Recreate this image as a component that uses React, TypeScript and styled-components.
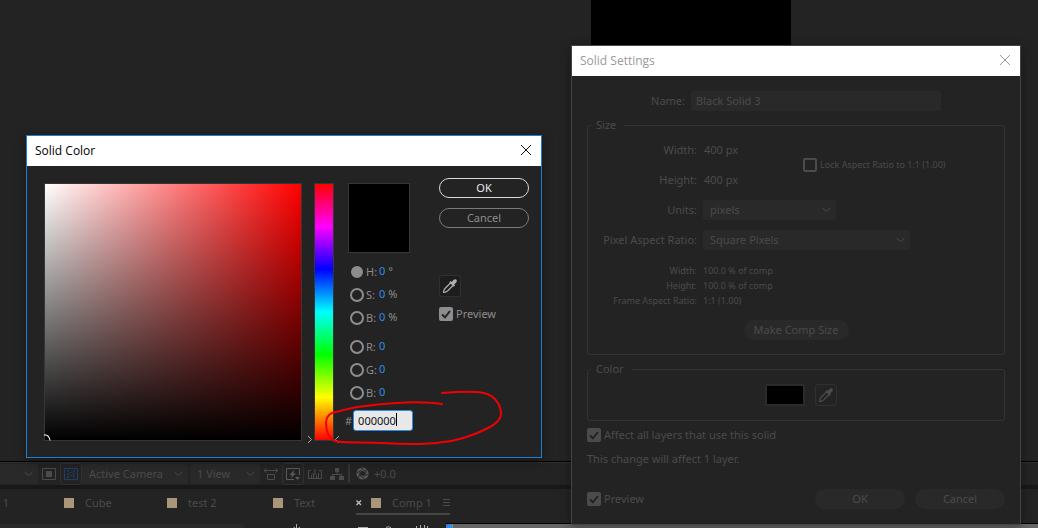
import React, { useState } from 'react';
import styled, { createGlobalStyle, css } from 'styled-components';

const ui = `"Noto Sans", "Open Sans", sans-serif`;
const dim = '#4b4b4b';

const GlobalStyle = createGlobalStyle`
  *, *::before, *::after { box-sizing: border-box; }
  body { margin: 0; background: #232323; font: 11px/14px ${ui}; color: ${dim}; overflow: hidden; }
  button, input, select { font: inherit; color: inherit; margin: 0; }
`;

const Workspace = styled.div`
  position: relative;
  display: flex;
  flex-direction: column;
  height: 100vh;
  overflow: hidden;
`;

const Viewer = styled.main`
  flex: 1;
  min-height: 0;
  overflow: hidden;
`;

const Composition = styled.div`
  width: 200px;
  height: 200px;
  margin-left: 591px;
  background: #000;
`;

/* ---------- Footer panels ---------- */

const ViewerBar = styled.div`
  display: flex;
  align-items: center;
  height: 24px;
  flex: none;
  border-top: 1px solid #000;
  box-shadow: inset 0 1px #303030;
`;

const SelectBox = styled.span<{ $w: number }>`
  position: relative;
  display: inline-flex;
  width: ${(p) => p.$w}px;
  height: 20px;
  flex: none;
`;

const SelectField = styled.select`
  width: 100%;
  height: 100%;
  padding: 0 20px 0 7px;
  appearance: none;
  border: 0;
  border-radius: 2px;
  background: #292929;
`;

const SelectArrow = styled.svg`
  position: absolute;
  right: 5px;
  top: 7px;
  pointer-events: none;
`;

const ViewSelects = styled.span`
  display: flex;
  gap: 2px;
`;

const IconButton = styled.button<{ $w?: number; $framed?: boolean }>`
  display: inline-flex;
  align-items: center;
  justify-content: center;
  width: ${(p) => p.$w ?? 22}px;
  height: 22px;
  padding: 0;
  flex: none;
  border: 1px solid ${(p) => (p.$framed ? '#303030' : 'transparent')};
  border-radius: 3px;
  background: transparent;
`;

const BarDivider = styled.span`
  width: 2px;
  height: 19px;
  margin: 0 4px 0 0;
  background: #343434;
`;

const Exposure = styled.span`
  margin-left: 4px;
`;

const Tabs = styled.nav`
  display: flex;
  align-items: flex-start;
  height: 38px;
  flex: none;
  border-top: 4px solid #181818;
`;

const Tab = styled.button<{ $w: number; $active?: boolean }>`
  display: flex;
  align-items: center;
  gap: 11px;
  width: ${(p) => p.$w}px;
  height: 26px;
  padding: 3px 0 0;
  flex: none;
  border: 0;
  border-bottom: 2px solid ${(p) => (p.$active ? '#464646' : 'transparent')};
  background: none;
  text-align: left;
  white-space: nowrap;
`;

const Label = styled.i`
  width: 10px;
  height: 10px;
  flex: none;
  background: #aa9678;
`;

const TabClose = styled.svg`
  margin-right: -2px;
  flex: none;
`;

const Timeline = styled.div`
  display: flex;
  height: 5px;
  flex: none;
`;

const TimelineColumns = styled.div`
  display: flex;
  width: 446px;
  flex: none;
`;

const SearchStrip = styled.div`
  width: 244px;
  height: 4px;
  margin-top: 1px;
  border-radius: 0 3px 0 0;
  background: #2a2a2a;
`;

const WorkArea = styled.div`
  flex: 1;
  border-top: 1px solid #000;
  background: #666;
`;

const WorkAreaHandle = styled.div`
  width: 7px;
  height: 4px;
  border-right: 1px solid #8a8a8a;
  border-radius: 4px 0 0 0;
  background: #2d8ceb;
`;

/* ---------- Dialog parts ---------- */

const Dialog = styled.section<{ $x: number; $y: number; $w: number; $edge: string }>`
  position: absolute;
  left: ${(p) => p.$x}px;
  top: ${(p) => p.$y}px;
  width: ${(p) => p.$w}px;
  border: 1px solid ${(p) => p.$edge};
  background: #232323;
  box-shadow: 0 3px 10px rgba(0, 0, 0, 0.35);
`;

const TitleBar = styled.header<{ $inactive?: boolean }>`
  display: flex;
  align-items: center;
  justify-content: space-between;
  height: 30px;
  padding: 0 7px 0 8px;
  background: #fff;
  color: ${(p) => (p.$inactive ? '#999' : '#000')};
  font: 12px/16px "Open Sans", "Noto Sans", sans-serif;
`;

const Title = styled.h1`
  margin: 0;
  font: inherit;
`;

const CloseButton = styled.button`
  display: flex;
  padding: 0 2px 2px;
  border: 0;
  background: none;
`;

const PillButton = styled.button<{ $tone?: 'primary' | 'outline' | 'muted'; $w?: number }>`
  width: ${(p) => p.$w ?? 90}px;
  height: 20px;
  padding: 0;
  border: 1px solid transparent;
  border-radius: 10px;
  line-height: 16px;
  ${(p) =>
    p.$tone === 'primary'
      ? css`background: #232323; border-color: #d8d8d8; color: #e8e8e8;`
      : p.$tone === 'outline'
        ? css`background: #232323; border-color: #7b7b7b; color: #8d8d8d;`
        : css`background: #292929; color: ${dim};`}
`;

const CheckLabel = styled.label<{ $small?: boolean }>`
  display: inline-flex;
  align-items: center;
  gap: 3px;
  white-space: nowrap;
  font-size: ${(p) => (p.$small ? 9 : 11)}px;
`;

const CheckBox = styled.span`
  position: relative;
  display: flex;
  width: 14px;
  height: 14px;
`;

const CheckInput = styled.input`
  width: 14px;
  height: 14px;
  appearance: none;
  border: 2px solid currentColor;
  border-radius: 2px;
  &:checked { background: currentColor; }
  &:not(:checked) + svg { display: none; }
`;

const CheckMark = styled.svg`
  position: absolute;
  inset: 0;
  pointer-events: none;
`;

/* ---------- Solid Color ---------- */

const PickerBody = styled.div`
  display: flex;
  padding: 12px 12px 16px 17px;
  color: #8d8d8d;
`;

const ColorField = styled.div`
  position: relative;
  width: 258px;
  height: 258px;
  margin-top: 5px;
  flex: none;
  border: 1px solid #363636;
  background: linear-gradient(to bottom, transparent, #000), linear-gradient(to right, #fff, #f00);
`;

const FieldCursor = styled.svg`
  position: absolute;
  left: -2px;
  bottom: -2px;
`;

const HueStrip = styled.div`
  position: relative;
  width: 20px;
  height: 258px;
  margin: 5px 0 0 12px;
  flex: none;
  border: 1px solid #363636;
  background: linear-gradient(to bottom, #f00, #f0f, #00f, #0ff, #0f0, #ff0, #f00);
`;

const HuePointers = styled.svg`
  position: absolute;
  left: -8px;
  bottom: -4px;
`;

const Channels = styled.div`
  width: 70px;
  margin: 5px 0 0 11px;
`;

const Preview = styled.div`
  width: 62px;
  height: 70px;
  margin: 0 0 7px 3px;
  border: 1px solid #363636;
  background: #000;
`;

const ChannelGroup = styled.div`
  margin: 0 0 6px 5px;
`;

const ChannelRow = styled.div`
  display: grid;
  grid-template-columns: 16px 13px auto auto;
  justify-content: start;
  align-items: center;
  height: 23px;
`;

const Radio = styled.input`
  width: 14px;
  height: 14px;
  appearance: none;
  border: 2px solid #8d8d8d;
  border-radius: 50%;
  &:checked { width: 12px; height: 12px; margin-left: 1px; background: #8d8d8d; }
`;

const ChannelValue = styled.span`
  padding-bottom: 2px;
  color: #2d8ceb;
`;

const ChannelUnit = styled.span`
  padding: 0 0 1px 3px;
`;

const HexRow = styled.label`
  display: flex;
  align-items: center;
  gap: 1px;
`;

const HexInput = styled.input`
  width: 60px;
  height: 21px;
  padding: 0 0 1px 4px;
  border: 1px solid #2d8ceb;
  border-radius: 3px;
  outline: 0;
  background: #e8e8e8;
  color: #111;
`;

const HexBox = styled.span`
  position: relative;
  display: flex;
`;

const Caret = styled.i`
  position: absolute;
  left: 43px;
  top: 3px;
  width: 1px;
  height: 13px;
  background: #000;
`;

const Actions = styled.div`
  display: flex;
  flex-direction: column;
  align-items: flex-start;
  gap: 10px;
  margin-left: auto;
`;

const Sampler = styled(IconButton)`
  margin-top: 37px;
  background: #1d1d1d;
`;

const Scribble = styled.svg`
  position: absolute;
  left: 290px;
  top: 245px;
  pointer-events: none;
`;

/* ---------- Solid Settings ---------- */

const SettingsBody = styled.form`
  display: flex;
  flex-direction: column;
  padding: 15px;
`;

const NameRow = styled.label`
  display: grid;
  grid-template-columns: 98px 250px;
  gap: 6px;
  align-items: center;
  text-align: right;
`;

const TextInput = styled.input`
  height: 20px;
  padding: 0 5px 1px;
  border: 0;
  border-radius: 2px;
  background: #292929;
`;

const Group = styled.fieldset<{ $top: number }>`
  min-width: 0;
  margin: 7px 0 0;
  padding: ${(p) => p.$top}px 0 14px;
  border: 1px solid #323232;
  border-radius: 3px;
`;

const Legend = styled.legend`
  margin-left: 3px;
  padding: 0 8px 0 5px;
`;

const SizeGrid = styled.div`
  display: grid;
  grid-template-columns: 109px 94px 1fr;
  grid-auto-rows: 30px;
  column-gap: 6px;
  align-items: center;
`;

const FieldLabel = styled.label`
  text-align: right;
  white-space: nowrap;
`;

const NumberValue = styled.span`
  padding-left: 1px;
`;

const Wide = styled.span`
  display: flex;
  grid-column: 2 / 4;
`;

const LockCell = styled.div`
  display: flex;
  align-items: center;
  grid-column: 3;
  grid-row: 1 / 3;
`;

const Facts = styled.dl`
  display: grid;
  grid-template-columns: 109px 1fr;
  column-gap: 6px;
  margin: 8px 0 12px;
  font-size: 9px;
  line-height: 15px;
`;

const FactName = styled.dt`
  text-align: right;
`;

const FactValue = styled.dd`
  margin: 0;
`;

const Centered = styled.div<{ $gap?: boolean }>`
  display: flex;
  justify-content: center;
  gap: 10px;
  padding-left: ${(p) => (p.$gap ? 10 : 0)}px;
`;

const Swatch = styled.button`
  width: 40px;
  height: 22px;
  padding: 0;
  border: 2px solid #2b2b2b;
  background: #000;
`;

const Options = styled.div`
  display: flex;
  flex-direction: column;
  align-items: flex-start;
  gap: 10px;
  margin: 7px 0 23px;
`;

const Note = styled.p`
  margin: 0;
`;

const Footer = styled.footer`
  display: flex;
  align-items: center;
  gap: 10px;
`;

const Spacer = styled.span`
  flex: 1;
`;

function Close({ color }: { color: string }) {
  return (
    <CloseButton aria-label="Close" type="button">
      <svg width="12" height="12" viewBox="0 0 12 12" fill="none" stroke={color}>
        <path d="M1 1L11 11M11 1L1 11" />
      </svg>
    </CloseButton>
  );
}

function Dropper({ color }: { color: string }) {
  return (
    <svg width="16" height="16" viewBox="0 0 16 16" fill="none">
      <path d="M9 4.500L3 10.500Q1.300 12.500 1.500 14.500Q3.500 14.500 5.500 13L11.500 7" stroke={color} strokeWidth="1.2" />
      <path d="M7.300 4.200L8.600 3L9.800 4L11.600 1.800Q13.200 .6 14.500 1.700Q15.500 3 14.200 4.600L12.200 6.400L13 7.400L11.800 8.700Z" fill={color} />
    </svg>
  );
}

function Select({ id, label, value, w }: { id: string; label?: string; value: string; w: number }) {
  return (
    <SelectBox $w={w}>
      <SelectField id={id} aria-label={label} defaultValue={value}>
        <option>{value}</option>
      </SelectField>
      <SelectArrow width="9" height="6" fill="none" stroke={dim}>
        <path d="M.5 1L4.500 4.500L8.500 1" />
      </SelectArrow>
    </SelectBox>
  );
}

function Check({ text, checked, small }: { text: string; checked?: boolean; small?: boolean }) {
  return (
    <CheckLabel $small={small}>
      <CheckBox>
        <CheckInput type="checkbox" defaultChecked={checked} />
        <CheckMark width="14" height="14" fill="none" stroke="#232323" strokeWidth="2">
          <path d="M3 7.500L6 10.300L11 4" />
        </CheckMark>
      </CheckBox>
      {text}
    </CheckLabel>
  );
}

type Channel = { id: string; name: string; unit?: string };
const hsb: Channel[] = [
  { id: 'hue', name: 'H:', unit: '°' },
  { id: 'sat', name: 'S:', unit: '%' },
  { id: 'bri', name: 'B:', unit: '%' },
];
const rgb: Channel[] = [
  { id: 'red', name: 'R:' },
  { id: 'green', name: 'G:' },
  { id: 'blue', name: 'B:' },
];

function ChannelList({ items }: { items: Channel[] }) {
  return (
    <ChannelGroup>
      {items.map((c) => (
        <ChannelRow key={c.id}>
          <Radio type="radio" name="channel" id={c.id} defaultChecked={c.id === 'hue'} />
          <label htmlFor={c.id}>{c.name}</label>
          <ChannelValue>0</ChannelValue>
          {c.unit && <ChannelUnit>{c.unit}</ChannelUnit>}
        </ChannelRow>
      ))}
    </ChannelGroup>
  );
}

function SolidColor() {
  const [hex, setHex] = useState('000000');
  return (
    <Dialog $x={26} $y={135} $w={516} $edge="#1b7fd0" aria-label="Solid Color">
      <TitleBar>
        <Title>Solid Color</Title>
        <Close color="#111" />
      </TitleBar>
      <PickerBody>
        <ColorField>
          <FieldCursor width="9" height="9" fill="none" stroke="#ddd" strokeWidth="1.3">
            <path d="M1 2Q6 1.500 7 7.500" />
          </FieldCursor>
        </ColorField>
        <HueStrip>
          <HuePointers width="34" height="9" fill="none" stroke="#aaa">
            <path d="M1 1L4.500 4.500L1 8M32 1L28.500 4.500L32 8" />
          </HuePointers>
        </HueStrip>
        <Channels>
          <Preview />
          <ChannelList items={hsb} />
          <ChannelList items={rgb} />
          <HexRow>
            #
            <HexBox>
              <HexInput value={hex} onChange={(e) => setHex(e.target.value)} />
              <Caret />
            </HexBox>
          </HexRow>
        </Channels>
        <Actions>
          <PillButton $tone="primary">OK</PillButton>
          <PillButton $tone="outline">Cancel</PillButton>
          <Sampler $framed aria-label="Eyedropper"><Dropper color="#b0b0b0" /></Sampler>
          <Check text="Preview" checked />
        </Actions>
      </PickerBody>
      <Scribble width="200" height="70" fill="none" stroke="#f00000" strokeWidth="2" strokeLinecap="round">
        <path d="M125 12C137 11 158 10 167 12C179 15 184 25 184 33C184 38 178 44 171 47C158 54 139 60 126 61C107 64 81 63 65 62C47 61 23 62 18 60C11 57 9 49 9 42C9 37 11 34 15 32C35 26 61 23 79 22C94 21 112 21 125 23" />
      </Scribble>
    </Dialog>
  );
}

function SolidSettings() {
  return (
    <Dialog $x={571} $y={45} $w={450} $edge="#444" aria-label="Solid Settings">
      <TitleBar $inactive>
        <Title>Solid Settings</Title>
        <Close color="#999" />
      </TitleBar>
      <SettingsBody onSubmit={(e) => e.preventDefault()}>
        <NameRow>
          Name:
          <TextInput defaultValue="Black Solid 3" />
        </NameRow>
        <Group $top={3}>
          <Legend>Size</Legend>
          <SizeGrid>
            <FieldLabel as="span">Width:</FieldLabel>
            <NumberValue>400 px</NumberValue>
            <LockCell><Check text="Lock Aspect Ratio to 1:1 (1.00)" small /></LockCell>
            <FieldLabel as="span">Height:</FieldLabel>
            <NumberValue>400 px</NumberValue>
            <FieldLabel htmlFor="units">Units:</FieldLabel>
            <Wide><Select id="units" value="pixels" w={133} /></Wide>
            <FieldLabel htmlFor="par">Pixel Aspect Ratio:</FieldLabel>
            <Wide><Select id="par" value="Square Pixels" w={207} /></Wide>
          </SizeGrid>
          <Facts>
            <FactName>Width:</FactName><FactValue>100.0 % of comp</FactValue>
            <FactName>Height:</FactName><FactValue>100.0 % of comp</FactValue>
            <FactName>Frame Aspect Ratio:</FactName><FactValue>1:1 (1.00)</FactValue>
          </Facts>
          <Centered><PillButton type="button" $w={105}>Make Comp Size</PillButton></Centered>
        </Group>
        <Group $top={8}>
          <Legend>Color</Legend>
          <Centered $gap>
            <Swatch type="button" aria-label="Solid color" />
            <IconButton type="button" $framed aria-label="Eyedropper"><Dropper color={dim} /></IconButton>
          </Centered>
        </Group>
        <Options>
          <Check text="Affect all layers that use this solid" checked />
          <Note>This change will affect 1 layer.</Note>
        </Options>
        <Footer>
          <Check text="Preview" checked />
          <Spacer />
          <PillButton>OK</PillButton>
          <PillButton type="button">Cancel</PillButton>
        </Footer>
      </SettingsBody>
    </Dialog>
  );
}

export default function App() {
  return (
    <Workspace>
      <GlobalStyle />
      <Viewer><Composition /></Viewer>
      <ViewerBar>
        <Select id="channelView" label="Channels" value="" w={38} />
        <IconButton aria-label="Region of interest">
          <svg width="14" height="12" fill="none" stroke={dim}>
            <path d="M.5 .5H13.500V11.500H.5Z" /><path d="M4 3H10V9H4Z" fill={dim} stroke="none" />
          </svg>
        </IconButton>
        <IconButton $framed aria-label="Transparency grid">
          <svg width="14" height="12" fill="none" stroke="#1f4066">
            <path d="M.5 .5H13.500V11.500H.5Z" />
            <path d="M3 2h2v2H3zM9 2h2v2H9zM5 4h4v1H5zM3 5h2v2H3zM9 5h2v2H9zM5 7h4v1H5zM3 8h2v2H3zM9 8h2v2H9z" fill="#1f3550" stroke="none" />
          </svg>
        </IconButton>
        <ViewSelects>
          <Select id="camera" label="Camera" value="Active Camera" w={106} />
          <Select id="views" label="View layout" value="1 View" w={70} />
        </ViewSelects>
        <IconButton aria-label="Pixel aspect correction">
          <svg width="16" height="12" fill="none" stroke={dim}>
            <path d="M1 2.500H15M3.500 .5L1 2.500L3.500 4.500M12.500 .5L15 2.500L12.500 4.500M4.500 6.500H11.500V11.500H4.500Z" />
          </svg>
        </IconButton>
        <IconButton $framed aria-label="Fast previews">
          <svg width="16" height="14" fill="none" stroke="#5a5a5a">
            <path d="M9 12.500H1.500V1.500H14.500V8" /><path d="M9 3L4.500 8H7L6 11L11 6.500H8.500ZM10 10H15L12.500 13Z" fill="#5a5a5a" stroke="none" />
          </svg>
        </IconButton>
        <IconButton aria-label="Timeline">
          <svg width="14" height="12" fill="none" stroke={dim}>
            <path d="M3 2.500H.5V10.500H13.500V2.500H11M3.500 7V10M5.500 5V10M8.500 7V10M10.500 5V10M7 1V7" />
          </svg>
        </IconButton>
        <IconButton aria-label="Flowchart">
          <svg width="14" height="12" fill="none" stroke={dim}>
            <path d="M7 4V6.500M2.500 9V6.500H11.500V9" /><path d="M5 0h4v4H5zM0 8h5v4H0zM9 8h5v4H9z" fill={dim} stroke="none" />
          </svg>
        </IconButton>
        <BarDivider />
        <IconButton $w={16} aria-label="Reset exposure">
          <svg width="13" height="13" viewBox="0 0 13 13" fill="none" stroke="#5a5a5a">
            <circle cx="6.500" cy="6.500" r="4.300" strokeWidth="3.600" />
            <path d="M5 1L9.500 4.500M10.500 2L9.300 7.800M12.300 7L7.500 9.800M8.500 12L3.800 8.500M2.500 11L3.800 5.500M.5 6L5.500 3.400" stroke="#232323" strokeWidth=".9" />
          </svg>
        </IconButton>
        <Exposure>+0.0</Exposure>
      </ViewerBar>
      <Tabs>
        <Tab $w={64}>&nbsp;1</Tab>
        <Tab $w={103}><Label />Cube</Tab>
        <Tab $w={106}><Label />test 2</Tab>
        <Tab $w={83}><Label />Text</Tab>
        <Tab $w={94} $active>
          <TabClose width="6" height="6" fill="none" stroke="#c0c0c0" strokeWidth="1.300"><path d="M.5 .5L5 5M5 .5L.5 5" /></TabClose>
          <Label />Comp 1
          <svg width="9" height="8" stroke={dim}><path d="M0 .5H9M0 3.500H9M0 6.500H9" /></svg>
        </Tab>
      </Tabs>
      <Timeline>
        <TimelineColumns>
          <SearchStrip />
          <svg width="200" height="5" stroke="#aaa" fill="none">
            <path d="M52.500 1V5M49.500 4L51 5M56 4L54.500 5M114 4.500H124M142 4.500Q144 3 147 4.500M172.500 3V5M176.500 2V5M180.500 2V5M183.500 3V5" />
          </svg>
        </TimelineColumns>
        <WorkArea><WorkAreaHandle /></WorkArea>
      </Timeline>
      <SolidSettings />
      <SolidColor />
    </Workspace>
  );
}
